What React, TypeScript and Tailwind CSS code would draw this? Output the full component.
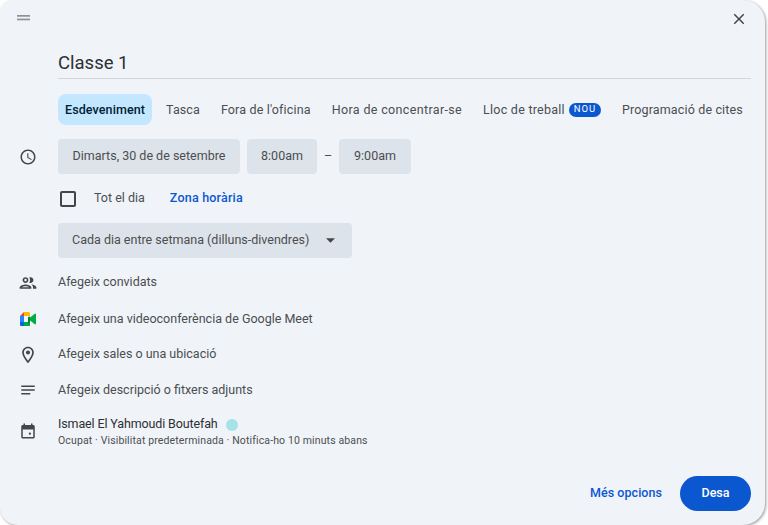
import React from "react";

const Tab = ({ children, active, className = "" }: { children: React.ReactNode; active?: boolean; className?: string }) => (
  <div className={(active ? "h-[31px] flex items-center px-[7px] pt-[1px] rounded-lg bg-[#c2e7ff] text-[#001d35] font-medium tracking-[0.1px]" : "h-[31px] flex items-center pt-[1px] text-[#4b4e50]") + " " + className}>
    {children}
  </div>
);

const Row = ({ icon, children, h }: { icon: React.ReactNode; children: React.ReactNode; h: string }) => (
  <div className={`flex items-center ${h}`}>
    <div className="w-[58px] flex justify-start pl-[18px] shrink-0">{icon}</div>
    {children}
  </div>
);

const Chip = ({ children, className }: { children: React.ReactNode; className: string }) => (
  <div className={`h-[35px] flex items-center justify-center rounded bg-[#dde3ea] text-[#4b4e50] ${className}`}>{children}</div>
);

export default function App() {
  return (
    <div className="w-[768px] h-[525px] bg-white overflow-hidden font-['Roboto',sans-serif] text-[12.5px]">
      <div className="w-[765px] h-[525px] bg-[#f0f4f9] rounded-br-[22px] rounded-tr-[22px] rounded-tl-[14px] rounded-bl-[18px] shadow-[1px_1px_3px_rgba(0,0,0,0.4)] flex flex-col">
        <div className="h-[50px] shrink-0 flex items-start justify-between pt-[10px] pl-[17px] pr-[17px]">
          <svg width="13" height="16" viewBox="0 0 13 16">
            <rect x="0" y="5" width="13" height="1.7" fill="#8e9398" />
            <rect x="0" y="8.600" width="13" height="1.7" fill="#8e9398" />
          </svg>
          <svg width="18" height="18" viewBox="0 0 24 24" fill="#444746">
            <path d="M19 6.410 17.590 5 12 10.590 6.410 5 5 6.410 10.590 12 5 17.590 6.410 19 12 13.410 17.590 19 19 17.590 13.410 12z" />
          </svg>
        </div>
        <div className="ml-[58px] w-[693px] h-[29px] border-b border-[#d3d7db] flex items-center text-[18.5px] text-[#2d2f31]">
          Classe 1
        </div>
        <div className="ml-[58px] mt-[15px] flex items-center gap-[14px] w-[693px]">
          <Tab active>Esdeveniment</Tab>
          <Tab className="tracking-[0.1px]">Tasca</Tab>
          <div className="ml-[7px]"><Tab className="tracking-[0.15px]">Fora de l'oficina</Tab></div>
          <div className="ml-[7px]"><Tab className="tracking-[0.35px]">Hora de concentrar-se</Tab></div>
          <div className="ml-[7px] flex items-center">
            <Tab className="tracking-[0.25px]">Lloc de treball</Tab>
            <span className="ml-[4px] h-[14px] w-[32px] rounded-full bg-[#0b57d0] text-white text-[9.5px] tracking-[1px] flex items-center justify-center">NOU</span>
          </div>
          <div className="ml-[7px]"><Tab className="tracking-[0.15px]">Programació de cites</Tab></div>
        </div>
        <div className="mt-[14px]">
          <Row
            h="h-[35px]"
            icon={
              <svg width="18" height="18" viewBox="0 0 24 24" fill="#444746" className="ml-[1px]">
                <path d="M11.990 2C6.470 2 2 6.480 2 12s4.470 10 9.990 10C17.520 22 22 17.520 22 12S17.520 2 11.990 2zM12 20c-4.420 0-8-3.580-8-8s3.580-8 8-8 8 3.580 8 8-3.580 8-8 8zm.5-13H11v6l5.250 3.150.75-1.230-4.500-2.670z" />
              </svg>
            }
          >
            <Chip className="w-[182px]">Dimarts, 30 de de setembre</Chip>
            <Chip className="w-[70px] ml-[7px]">8:00am</Chip>
            <span className="w-[22px] text-center text-[#4b4e50]">–</span>
            <Chip className="w-[72px]">9:00am</Chip>
          </Row>
        </div>
        <div className="ml-[60px] mt-[7px] h-[35px] flex items-center">
          <div className="w-[16px] h-[16px] border-2 border-[#444746] rounded-[2px]" />
          <span className="ml-[18px] text-[#4b4e50]">Tot el dia</span>
          <span className="ml-[25px] text-[#0b57d0] font-medium tracking-[0.2px]">Zona horària</span>
        </div>
        <div className="ml-[58px] mt-[7px] w-[294px] h-[35px] rounded bg-[#dde3ea] text-[#4b4e50] flex items-center pl-[14px]">
          <span>Cada dia entre setmana (dilluns-divendres)</span>
          <svg width="9" height="5" viewBox="0 0 10 5" className="ml-[17px]"><path d="M0 0h10L5 5z" fill="#444746" /></svg>
        </div>
        <div className="mt-[7px]">
          <Row
            h="h-[35px]"
            icon={
              <svg width="20" height="20" viewBox="0 0 24 24" fill="#444746">
                <path d="M9 12c1.930 0 3.500-1.570 3.500-3.500S10.930 5 9 5 5.500 6.570 5.500 8.500 7.070 12 9 12zm0-5c.83 0 1.500.67 1.500 1.500S9.830 10 9 10s-1.500-.67-1.500-1.500S8.170 7 9 7zm0 6.750c-2.340 0-7 1.170-7 3.500V19h14v-1.750c0-2.330-4.660-3.500-7-3.500zM4.340 17c.84-.58 2.870-1.250 4.660-1.250s3.820.67 4.660 1.250H4.340zM16.040 13.810c1.160.84 1.960 1.960 1.960 3.440V19h4v-1.750c0-2.020-3.500-3.170-5.960-3.440zM15 12c1.930 0 3.500-1.570 3.500-3.500S16.930 5 15 5c-.54 0-1.040.13-1.500.35.63.89 1 1.980 1 3.150s-.37 2.260-1 3.150c.46.22.96.35 1.500.35z" />
              </svg>
            }
          >
            <span className="text-[#4b4e50]">Afegeix convidats</span>
          </Row>
          <Row
            h="h-[37px]"
            icon={
              <svg width="17" height="14" viewBox="0 0 17 14" className="ml-[2px] mt-[1px]">
                <path d="M0 4 4 0v4z" fill="#ea4335" />
                <path d="M0 4h4v6H0z" fill="#2684fc" />
                <path d="M0 10h4v4H1.300C.6 14 0 13.400 0 12.700z" fill="#0066da" />
                <path d="M4 10h6v4H4z" fill="#00ac47" />
                <path d="M4 0h4.700C9.400 0 10 .6 10 1.300V4H4z" fill="#ffba00" />
                <path d="M10 5.500 14.800 1.700c.5-.4 1.200 0 1.200.6v9.400c0 .6-.7 1-1.200.6L10 8.500z" fill="#00ac47" />
                <path d="M10 4.500v5.500l-2 2V5z" fill="#00832d" />
              </svg>
            }
          >
            <span className="text-[#4b4e50] mt-[1px]">Afegeix una videoconferència de Google Meet</span>
          </Row>
          <Row
            h="h-[35px]"
            icon={
              <svg width="20" height="20" viewBox="0 0 24 24" fill="#444746">
                <path d="M12 2C8.130 2 5 5.130 5 9c0 5.250 7 13 7 13s7-7.750 7-13c0-3.870-3.130-7-7-7zM7 9c0-2.760 2.240-5 5-5s5 2.240 5 5c0 2.880-2.880 7.190-5 9.880C9.920 16.210 7 11.850 7 9z" />
                <circle cx="12" cy="9" r="2.500" />
              </svg>
            }
          >
            <span className="text-[#4b4e50]">Afegeix sales o una ubicació</span>
          </Row>
          <Row
            h="h-[36px]"
            icon={
              <svg width="18" height="18" viewBox="0 0 24 24" fill="#444746" className="ml-[1px]">
                <path d="M3 18h12v-2H3v2zM3 6v2h18V6H3zm0 7h18v-2H3v2z" />
              </svg>
            }
          >
            <span className="text-[#4b4e50]">Afegeix descripció o fitxers adjunts</span>
          </Row>
        </div>
        <div className="mt-[6px]">
          <Row
            h="h-[36px]"
            icon={
              <svg width="18" height="18" viewBox="0 0 24 24" fill="#444746" className="ml-[1px] -mt-[2px]">
                <path d="M19 4h-1V2h-2v2H8V2H6v2H5c-1.100 0-2 .9-2 2v14c0 1.100.9 2 2 2h14c1.100 0 2-.9 2-2V6c0-1.100-.9-2-2-2zm0 16H5V10h14v10zm-4.500-3a1.500 1.500 0 1 0 0-3 1.500 1.500 0 0 0 0 3z" />
              </svg>
            }
          >
            <div className="flex flex-col">
              <div className="flex items-center h-[17px] text-[#2d2f31] tracking-[-0.13px]">
                Ismael El Yahmoudi Boutefah
                <span className="ml-[8px] w-[12px] h-[12px] rounded-full bg-[#a5e3e9]" />
              </div>
              <div className="h-[15px] text-[10.5px] leading-[15px] text-[#4b4e50] tracking-[0.13px]">
                Ocupat · Visibilitat predeterminada · Notifica-ho 10 minuts abans
              </div>
            </div>
          </Row>
        </div>
        <div className="flex-1 flex items-end justify-end pr-[14px] pb-[14px]">
          <span className="h-[35px] flex items-center text-[#0b57d0] font-medium tracking-[0.05px] mr-[18px]">Més opcions</span>
          <div className="w-[71px] h-[35px] rounded-full bg-[#0b57d0] text-white font-medium flex items-center justify-center">Desa</div>
        </div>
      </div>
    </div>
  );
}
